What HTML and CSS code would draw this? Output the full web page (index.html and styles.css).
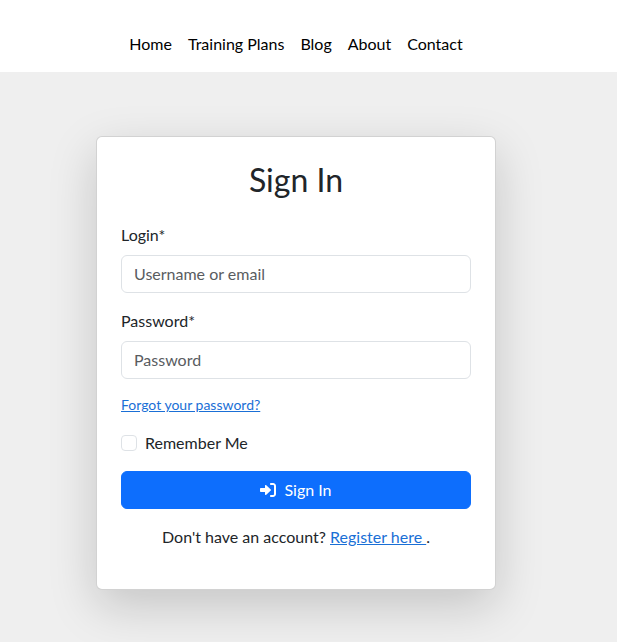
FILE: index.html
```html
<!DOCTYPE html>
<html lang="en">
<head>
<meta charset="utf-8">
<meta name="viewport" content="width=device-width, initial-scale=1">
<title>Sign In</title>
<link rel="stylesheet" href="styles.css">
</head>
<body>
<header class="site-header">
  <nav class="site-nav">
    <a href="#">Home</a>
    <a href="#">Training Plans</a>
    <a href="#">Blog</a>
    <a href="#">About</a>
    <a href="#">Contact</a>
  </nav>
</header>
<main class="page">
  <section class="card">
    <h1 class="card-title">Sign In</h1>
    <form>
      <div class="field">
        <label for="login">Login*</label>
        <input class="control" type="text" id="login" placeholder="Username or email">
      </div>
      <div class="field">
        <label for="password">Password*</label>
        <input class="control" type="password" id="password" placeholder="Password">
      </div>
      <p class="forgot"><a href="#">Forgot your password?</a></p>
      <div class="check">
        <input type="checkbox" id="remember">
        <label for="remember">Remember Me</label>
      </div>
      <button class="submit" type="submit">
        <svg class="icon" viewBox="0 0 512 512" aria-hidden="true"><path fill="currentColor" d="M344.700 238.500l-144.100-136C193.700 95.970 183.400 94.170 174.600 97.950C165.800 101.800 160.100 110.400 160.100 120V192H32.020C14.330 192 0 206.300 0 224v64c0 17.680 14.330 32 32.020 32h128.100v72c0 9.578 5.707 18.250 14.510 22.050c8.803 3.781 19.030 1.984 26-4.594l144.100-136C354.300 264.400 354.300 247.600 344.700 238.500zM416 32h-64c-17.670 0-32 14.330-32 32s14.330 32 32 32h64c17.670 0 32 14.330 32 32v256c0 17.670-14.330 32-32 32h-64c-17.670 0-32 14.330-32 32s14.330 32 32 32h64c53.020 0 96-42.980 96-96V128C512 74.980 469 32 416 32z"/></svg>
        <span>Sign In</span>
      </button>
      <p class="register">Don't have an account? <a href="#">Register here&nbsp;</a>.</p>
    </form>
  </section>
</main>
</body>
</html>
```
FILE: styles.css
```css
*,
*::before,
*::after {
  box-sizing: border-box;
}

html {
  height: 100%;
}

body {
  display: flex;
  flex-direction: column;
  min-height: 100%;
  margin: 0;
  background: #efefef;
  color: #212529;
  font-family: Lato, "Liberation Sans", sans-serif;
  font-size: 16px;
  line-height: 24px;
}

.site-header {
  padding: 32px 25px 16px 0;
  background: #fff;
}

.site-nav {
  display: flex;
  justify-content: center;
  gap: 16px;
}

.site-nav a {
  color: #000;
  text-decoration: none;
}

.page {
  flex: 1;
  padding: 64px 25px 52px 0;
}

.card {
  max-width: 400px;
  margin: 0 auto;
  padding: 24px;
  background: #fff;
  border: 1px solid rgba(0, 0, 0, 0.176);
  border-radius: 6px;
  box-shadow: 0 16px 48px rgba(0, 0, 0, 0.176);
}

.card-title {
  margin: 0 0 24px;
  font-size: 32px;
  font-weight: 400;
  line-height: 38px;
  text-align: center;
}

.field {
  margin-bottom: 16px;
}

.field label {
  display: block;
  margin-bottom: 8px;
}

.control {
  display: block;
  width: 100%;
  padding: 6px 12px;
  border: 1px solid #dee2e6;
  border-radius: 6px;
  background: #fff;
  color: #212529;
  font: inherit;
}

.control::placeholder {
  color: #595c5f;
  opacity: 1;
}

a {
  color: #1a6fd6;
}

.forgot {
  margin: 0 0 16px;
  font-size: 14px;
  line-height: 20px;
}

.check {
  display: flex;
  align-items: center;
  gap: 8px;
  margin-bottom: 16px;
}

.check input {
  appearance: none;
  width: 16px;
  height: 16px;
  margin: 0;
  border: 1px solid #dee2e6;
  border-radius: 4px;
  background: #fff;
}

.check input:checked {
  border-color: #0d6efd;
  background: #0d6efd;
}

.submit {
  display: flex;
  align-items: center;
  justify-content: center;
  gap: 8px;
  width: 100%;
  padding: 6px 12px;
  border: 1px solid #0d6efd;
  border-radius: 6px;
  background: #0d6efd;
  color: #fff;
  font: inherit;
  cursor: pointer;
}

.icon {
  width: 16px;
  height: 16px;
}

.register {
  margin: 16px 0;
  text-align: center;
}
```
